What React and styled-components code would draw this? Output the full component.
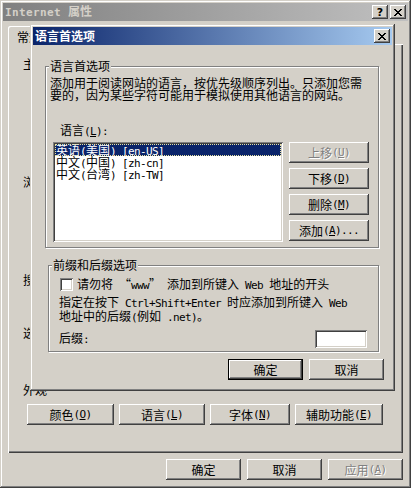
import styled, { createGlobalStyle, css } from "styled-components";

const FACE = "#d4d0c8";

const GlobalStyle = createGlobalStyle`
  html, body { margin: 0; padding: 0; background: ${FACE}; }
  body {
    font-family: "Noto Sans CJK SC", "Noto Sans", sans-serif;
    font-size: 12px;
    line-height: 12px;
    color: #000;
  }
  * { box-sizing: border-box; }
`;

const windowFrame = css`
  box-shadow: inset -1px -1px #404040, inset 1px 1px ${FACE},
    inset -2px -2px #808080, inset 2px 2px #fff;
`;

const bevel = `inset -1px -1px #404040, inset 1px 1px #fff, inset -2px -2px #808080, inset 2px 2px ${FACE}`;
const defaultBevel = `inset 0 0 0 1px #000, inset -2px -2px #404040, inset 2px 2px #fff, inset -3px -3px #808080`;
const sunken = `inset 1px 1px #808080, inset -1px -1px #fff, inset 2px 2px #404040, inset -2px -2px ${FACE}`;

const Window = styled.div`
  position: relative;
  width: 411px;
  height: 488px;
  padding: 3px;
  background: ${FACE};
  ${windowFrame}
  display: flex;
  flex-direction: column;
`;

// the language dialog sits on top of the Internet options window
const Dialog = styled(Window)`
  position: absolute;
  z-index: 2;
  left: 30px;
  top: 24px;
  width: 365px;
  height: 367px;
`;

const TitleBar = styled.div`
  height: 18px;
  flex: none;
  display: flex;
  align-items: center;
  padding: 0 2px;
  background: ${(p) =>
    p.$active
      ? "linear-gradient(to right, #0a246a, #a6caf0)"
      : "linear-gradient(to right, #808080, #c0c0c0)"};
  color: ${(p) => (p.$active ? "#fff" : FACE)};
  font-weight: bold;
`;

const TitleText = styled.span`
  flex: 1;
  white-space: nowrap;
`;

const TitleButtons = styled.div`
  display: flex;
  gap: 2px;
`;

const TitleButton = styled.div`
  width: 16px;
  height: 14px;
  background: ${FACE};
  box-shadow: ${bevel};
  display: flex;
  align-items: center;
  justify-content: center;
  color: #000;
`;

const HelpGlyph = styled.span`
  font-family: "DejaVu Sans", sans-serif;
  font-weight: bold;
  font-size: 11px;
  line-height: 11px;
  margin-top: 1px;
`;

const Mono = styled.span`
  font-family: "DejaVu Sans Mono", "Liberation Mono", monospace;
  font-size: 11px;
  letter-spacing: ${(p) => (p.$ls != null ? p.$ls : -0.62)}px;
  font-weight: ${(p) => (p.$bold ? "bold" : "normal")};
`;

const TabRow = styled.div`
  height: 21px;
  flex: none;
  margin-top: 2px;
  padding-left: 5px;
  display: flex;
  align-items: flex-end;
`;

const Tab = styled.div`
  position: relative;
  z-index: 1;
  height: 19px;
  margin-bottom: -1px;
  padding: 5px 10px 0 9px;
  background: ${FACE};
  border-radius: 2px 2px 0 0;
  box-shadow: inset 1px 1px #fff, inset -1px 0 #404040, inset -2px 0 #808080;
`;

const Panel = styled.div`
  height: 409px;
  flex: none;
  margin: 0 5px;
  padding: 14px 0 0 15px;
  box-shadow: inset 1px 1px #fff, inset -1px -1px #404040, inset -2px -2px #808080;
  display: flex;
  flex-direction: column;
`;

const Section = styled.div`
  height: ${(p) => (p.$h ? `${p.$h}px` : "auto")};
  flex: none;
  display: flex;
  flex-direction: column;
`;

const SectionHead = styled.div`
  display: flex;
  align-items: center;
  gap: 2px;
  margin-right: 10px;
`;

const SectionLabel = styled.span`
  white-space: nowrap;
`;

const Etched = styled.div`
  flex: 1;
  height: 2px;
  border-top: 1px solid #808080;
  border-bottom: 1px solid #fff;
`;

const ButtonRow = styled.div`
  display: flex;
  justify-content: ${(p) => p.$justify || "flex-start"};
  gap: ${(p) => p.$gap || 6}px;
  margin: ${(p) => p.$mt || 0}px ${(p) => p.$mr || 0}px 0 ${(p) => p.$ml || 0}px;
`;

const Button = styled.button`
  width: ${(p) => p.$w || 75}px;
  height: 21px;
  flex: none;
  margin: 0;
  padding: 0;
  border: 0;
  background: ${FACE};
  font: inherit;
  line-height: 12px;
  color: ${(p) => (p.disabled ? "#808080" : "#000")};
  text-shadow: ${(p) => (p.disabled ? "1px 1px #fff" : "none")};
  box-shadow: ${(p) => (p.$default ? defaultBevel : bevel)};
  display: flex;
  align-items: center;
  justify-content: center;
  white-space: nowrap;
`;

const DialogBody = styled.div`
  flex: 1;
  display: flex;
  flex-direction: column;
  padding: 21px 8px 0 12px;
`;

const GroupBox = styled.div`
  height: ${(p) => p.$h}px;
  flex: none;
  margin: ${(p) => p.$mt || 0}px 5px 0 ${(p) => p.$ml || 0}px;
  border: 1px solid #808080;
  box-shadow: inset 1px 1px #fff, 1px 1px #fff;
  display: flex;
  flex-direction: column;
`;

const GroupLabel = styled.span`
  align-self: flex-start;
  margin: -7px 0 0 3px;
  padding: 0 1px;
  background: ${FACE};
  line-height: 12px;
  white-space: nowrap;
`;

const GroupContent = styled.div`
  display: flex;
  flex-direction: column;
  padding: 0 ${(p) => p.$pr || 0}px 0 ${(p) => p.$pl || 0}px;
`;

const Paragraph = styled.div`
  margin-top: ${(p) => p.$mt || 0}px;
  line-height: 12px;
  white-space: nowrap;
`;

const FieldLabel = styled.div`
  margin: 23px 0 0 10px;
  white-space: nowrap;
`;

const ListRow = styled.div`
  display: flex;
  gap: 6px;
  margin: 4px 0 0 7px;
`;

const ListBox = styled.div`
  width: 230px;
  height: 100px;
  padding: 2px;
  background: #fff;
  box-shadow: ${sunken};
`;

const ListItem = styled.div`
  height: 12px;
  line-height: 12px;
  padding-left: 1px;
  white-space: nowrap;
  background: ${(p) => (p.$selected ? "#0a246a" : "transparent")};
  color: ${(p) => (p.$selected ? "#fff" : "#000")};
  outline: ${(p) => (p.$selected ? `1px dotted #e8e2a0` : "none")};
  outline-offset: -1px;
`;

const ButtonColumn = styled.div`
  display: flex;
  flex-direction: column;
  gap: 5px;
`;

const CheckRow = styled.div`
  display: flex;
  align-items: center;
  gap: 4px;
  margin: 7px 0 0 1px;
  height: 13px;
  line-height: 13px;
  white-space: nowrap;
`;

const CheckBox = styled.div`
  width: 13px;
  height: 13px;
  flex: none;
  background: #fff;
  box-shadow: ${sunken};
`;

const SuffixRow = styled.div`
  display: flex;
  align-items: center;
  justify-content: space-between;
  margin-top: 6px;
`;

const TextBox = styled.div`
  width: 52px;
  height: 18px;
  background: #fff;
  box-shadow: ${sunken};
`;

function CloseIcon() {
  const px = [
    [0, 0, 2], [6, 0, 2],
    [1, 1, 2], [5, 1, 2],
    [2, 2, 4],
    [3, 3, 2],
    [2, 4, 4],
    [1, 5, 2], [5, 5, 2],
    [0, 6, 2], [6, 6, 2],
  ];
  return (
    <svg width="8" height="7" viewBox="0 0 8 7" shapeRendering="crispEdges">
      {px.map(([x, y, w], i) => (
        <rect key={i} x={x} y={y} width={w} height={1} fill="#000" />
      ))}
    </svg>
  );
}

function Key({ k, suffix = "" }) {
  return (
    <Mono>
      (<u>{k}</u>){suffix}
    </Mono>
  );
}

export default function App() {
  return (
    <>
      <GlobalStyle />
      <Window>
        <TitleBar>
          <TitleText>
            <Mono $bold $ls={0.38}>Internet </Mono>属性
          </TitleText>
          <TitleButtons>
            <TitleButton>
              <HelpGlyph>?</HelpGlyph>
            </TitleButton>
            <TitleButton>
              <CloseIcon />
            </TitleButton>
          </TitleButtons>
        </TitleBar>

        <TabRow>
          <Tab>常规</Tab>
        </TabRow>

        <Panel>
          {/* group titles of the page, mostly hidden behind the dialog */}
          <Section $h={118}>
            <SectionLabel>主</SectionLabel>
          </Section>
          <Section $h={98}>
            <SectionLabel>浏</SectionLabel>
          </Section>
          <Section $h={53}>
            <SectionLabel>搜</SectionLabel>
          </Section>
          <Section $h={57}>
            <SectionLabel>选</SectionLabel>
          </Section>
          <Section>
            <SectionHead>
              <SectionLabel>外观</SectionLabel>
              <Etched />
            </SectionHead>
            <ButtonRow $mt={8} $ml={4} $gap={5}>
              <Button $w={87}>颜色<Key k="O" /></Button>
              <Button $w={86}>语言<Key k="L" /></Button>
              <Button $w={80}>字体<Key k="N" /></Button>
              <Button $w={88}>辅助功能<Key k="E" /></Button>
            </ButtonRow>
          </Section>
        </Panel>

        <ButtonRow $justify="flex-end" $mt={6} $mr={5}>
          <Button>确定</Button>
          <Button>取消</Button>
          <Button disabled>应用<Key k="A" /></Button>
        </ButtonRow>

        <Dialog>
          <TitleBar $active>
            <TitleText>语言首选项</TitleText>
            <TitleButton>
              <CloseIcon />
            </TitleButton>
          </TitleBar>
          <DialogBody>
            <GroupBox $h={182}>
              <GroupLabel>语言首选项</GroupLabel>
              <GroupContent $pl={4}>
                <Paragraph $mt={5}>
                  添加用于阅读网站的语言，按优先级顺序列出。只添加您需
                  <br />
                  要的，因为某些字符可能用于模拟使用其他语言的网站。
                </Paragraph>
                <FieldLabel>
                  语言<Mono>(<u>L</u>):</Mono>
                </FieldLabel>
              </GroupContent>
              <ListRow>
                <ListBox>
                  <ListItem $selected>
                    英语<Mono>(</Mono>美国<Mono>) [en-US]</Mono>
                  </ListItem>
                  <ListItem>
                    中文<Mono>(</Mono>中国<Mono>) [zh-cn]</Mono>
                  </ListItem>
                  <ListItem>
                    中文<Mono>(</Mono>台湾<Mono>) [zh-TW]</Mono>
                  </ListItem>
                </ListBox>
                <ButtonColumn>
                  <Button $w={80} disabled>上移<Key k="U" /></Button>
                  <Button $w={80}>下移<Key k="D" /></Button>
                  <Button $w={80}>删除<Key k="M" /></Button>
                  <Button $w={80}>添加<Key k="A" suffix="..." /></Button>
                </ButtonColumn>
              </ListRow>
            </GroupBox>

            <GroupBox $h={87} $mt={17} $ml={3}>
              <GroupLabel>前缀和后缀选项</GroupLabel>
              <GroupContent $pl={10} $pr={11}>
                <CheckRow>
                  <CheckBox />
                  <span>
                    请勿将<Mono> </Mono>“<Mono>www</Mono>”<Mono> </Mono>添加到所键入
                    <Mono> Web </Mono>地址的开头
                  </span>
                </CheckRow>
                <Paragraph $mt={5}>
                  指定在按下<Mono> Ctrl+Shift+Enter </Mono>时应添加到所键入<Mono> Web</Mono>
                  <br />
                  地址中的后缀<Mono>(</Mono>例如<Mono> .net)</Mono>。
                </Paragraph>
                <SuffixRow>
                  <span>
                    后缀<Mono>:</Mono>
                  </span>
                  <TextBox />
                </SuffixRow>
              </GroupContent>
            </GroupBox>

            <ButtonRow $justify="flex-end" $mt={7}>
              <Button $default>确定</Button>
              <Button>取消</Button>
            </ButtonRow>
          </DialogBody>
        </Dialog>
      </Window>
    </>
  );
}
